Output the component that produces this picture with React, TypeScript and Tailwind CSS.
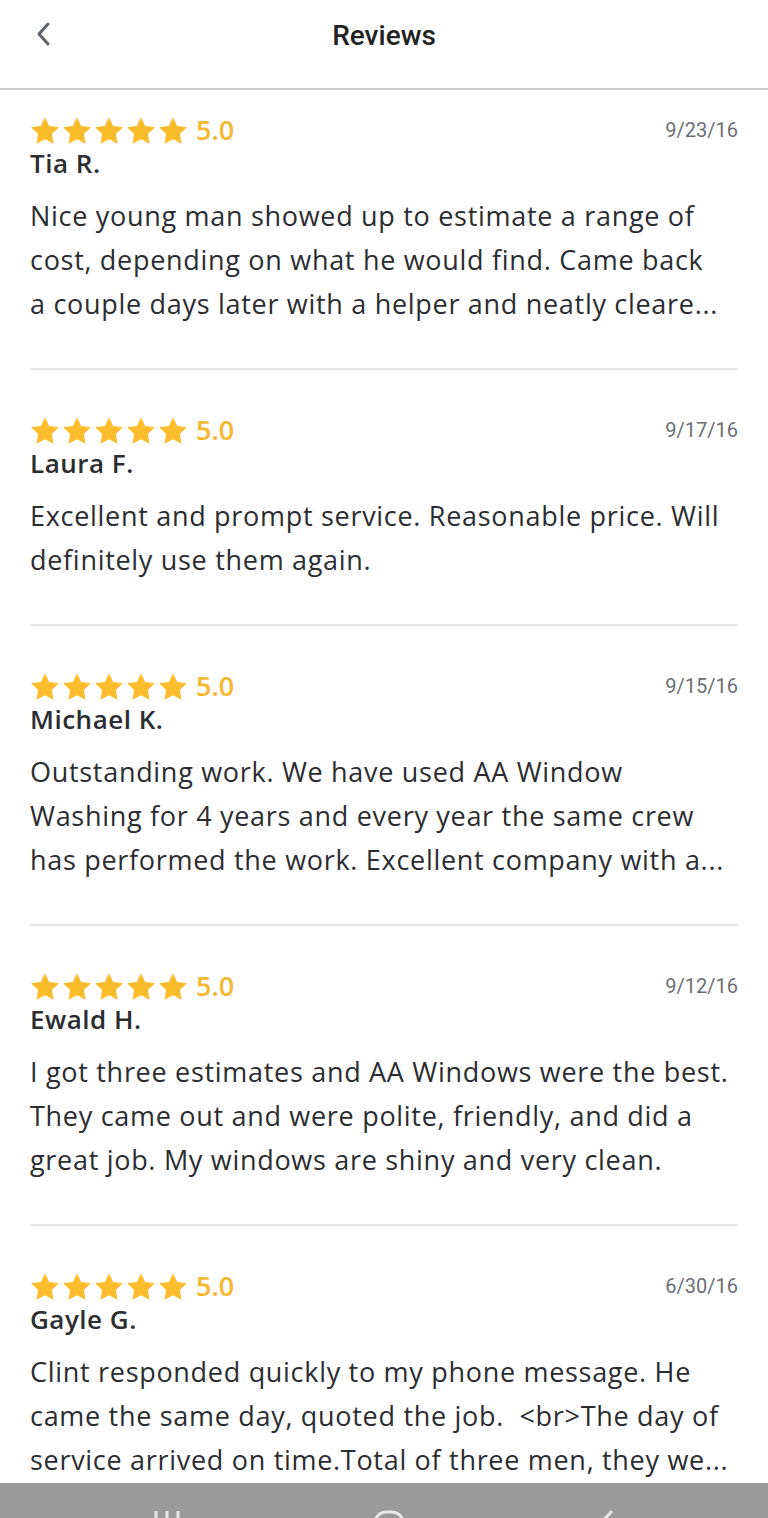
import React from "react";

type Review = {
  name: string;
  date: string;
  rating: string;
  lines: string[];
};

const reviews: Review[] = [
  {
    name: "Tia R.",
    date: "9/23/16",
    rating: "5.0",
    lines: [
      "Nice young man showed up to estimate a range of",
      "cost, depending on what he would find. Came back",
      "a couple days later with a helper and neatly cleare...",
    ],
  },
  {
    name: "Laura F.",
    date: "9/17/16",
    rating: "5.0",
    lines: [
      "Excellent and prompt service. Reasonable price. Will",
      "definitely use them again.",
    ],
  },
  {
    name: "Michael K.",
    date: "9/15/16",
    rating: "5.0",
    lines: [
      "Outstanding work. We have used AA Window",
      "Washing for 4 years and every year the same crew",
      "has performed the work. Excellent company with a...",
    ],
  },
  {
    name: "Ewald H.",
    date: "9/12/16",
    rating: "5.0",
    lines: [
      "I got three estimates and AA Windows were the best.",
      "They came out and were polite, friendly, and did a",
      "great job. My windows are shiny and very clean.",
    ],
  },
  {
    name: "Gayle G.",
    date: "6/30/16",
    rating: "5.0",
    lines: [
      "Clint responded quickly to my phone message. He",
      "came the same day, quoted the job.  <br>The day of",
      "service arrived on time.Total of three men, they we...",
    ],
  },
];

function Star() {
  return (
    <svg width="30" height="29" viewBox="0 0 24 23" className="shrink-0">
      <path
        d="M12 0.8l3.4 7 7.7 1.1-5.6 5.4 1.3 7.7L12 18.4l-6.8 3.6 1.3-7.7L0.9 8.9l7.7-1.1z"
        fill="#fbbd2c"
      />
    </svg>
  );
}

function ReviewItem({ r, first, last }: { r: Review; first: boolean; last: boolean }) {
  return (
    <div className={`${first ? "pt-[25px]" : "pt-[45px]"} ${last ? "" : "pb-[42px] border-b-2 border-[#e6e6e6]"}`}>
      <div className="flex h-[30px] items-center justify-between">
        <div className="flex items-center gap-[2px]">
          <Star />
          <Star />
          <Star />
          <Star />
          <Star />
          <span className="ml-[6px] text-[27px] font-semibold text-[#f5b82e] [font-family:'Open_Sans',sans-serif]">
            {r.rating}
          </span>
        </div>
        <span className="text-[20px] text-[#6b6f73] [font-family:Roboto,sans-serif]">{r.date}</span>
      </div>
      <div className="mt-[1px] text-[26px] leading-[34px] font-semibold tracking-[0.5px] text-[#2b2d30] [font-family:'Open_Sans',sans-serif]">
        {r.name}
      </div>
      <div className="mt-[14px] text-[27px] leading-[44px] tracking-[0.7px] text-[#2b2d30] [font-family:'Open_Sans',sans-serif]">
        {r.lines.map((l, i) => (
          <div key={i} className="whitespace-pre">{l}</div>
        ))}
      </div>
    </div>
  );
}

export default function App() {
  return (
    <div className="flex h-[1518px] w-[768px] flex-col overflow-hidden bg-white">
      <header className="relative flex h-[90px] shrink-0 items-start justify-center border-b-2 border-[#cfcfcf] pt-[15px]">
        <button className="absolute left-[32px] top-[20px] text-[#5f6368]">
          <svg width="24" height="28" viewBox="0 0 24 28" fill="none" stroke="currentColor" strokeWidth="3" strokeLinecap="round" strokeLinejoin="round">
            <path d="M16 4L7 14l9 10" />
          </svg>
        </button>
        <h1 className="text-[28px] font-medium text-[#222] [font-family:Roboto,sans-serif]">Reviews</h1>
      </header>

      <main className="flex-1 overflow-hidden px-[30px]">
        {reviews.map((r, i) => (
          <ReviewItem key={r.name} r={r} first={i === 0} last={i === reviews.length - 1} />
        ))}
      </main>

      <nav className="flex h-[35px] shrink-0 items-start justify-between overflow-hidden bg-[#9a9a9a] px-[150px] pt-[26px]">
        <svg width="34" height="30" viewBox="0 0 34 30" fill="none" stroke="#e8e8e8" strokeWidth="3">
          <path d="M6 2v26M17 2v26M28 2v26" />
        </svg>
        <svg width="34" height="34" viewBox="0 0 34 34" fill="none" stroke="#e8e8e8" strokeWidth="3">
          <rect x="3" y="3" width="28" height="28" rx="11" />
        </svg>
        <svg width="24" height="30" viewBox="0 0 24 30" fill="none" stroke="#e8e8e8" strokeWidth="3">
          <path d="M18 2L6 15l12 13" />
        </svg>
      </nav>
    </div>
  );
}
